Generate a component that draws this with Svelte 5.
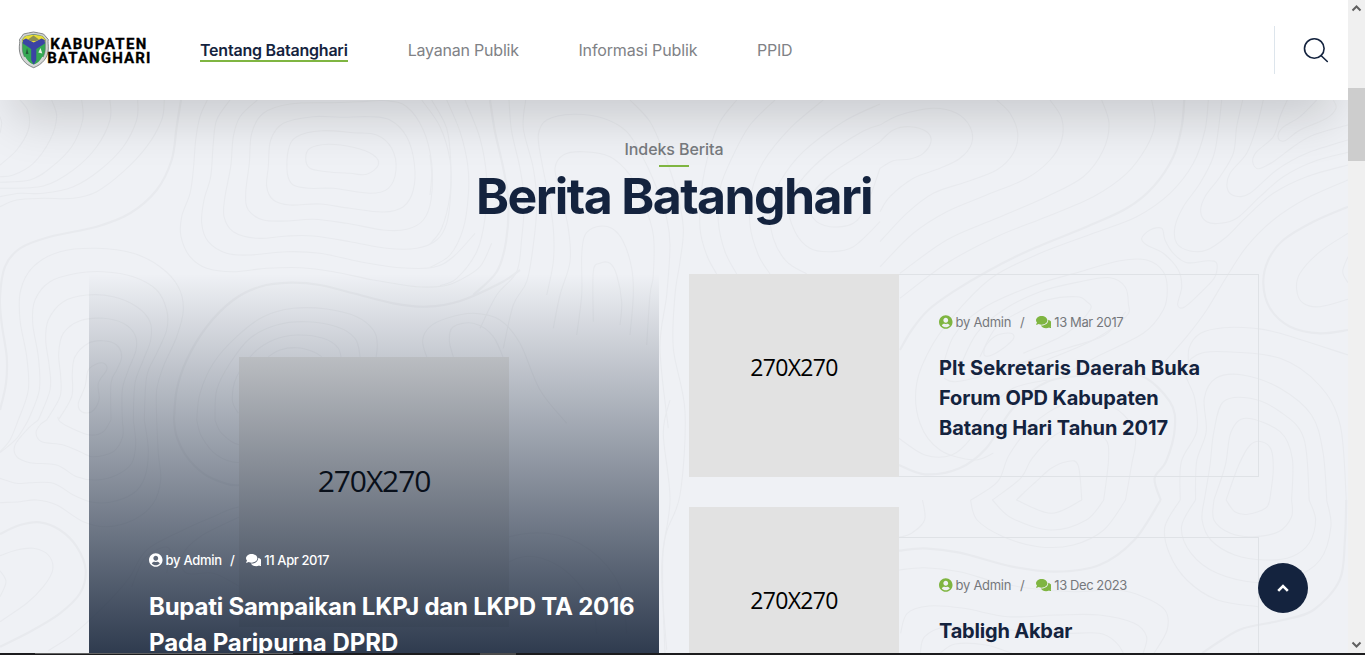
<script>
  const nav = [
    { label: 'Tentang Batanghari', ls: -0.21, w: 148, active: true },
    { label: 'Layanan Publik', ls: -0.21, w: 111 },
    { label: 'Informasi Publik', ls: -0.12, w: 119 },
    { label: 'PPID', ls: -0.3, w: 36 }
  ];

  const feature = {
    date: '11 Apr 2017',
    ls: -0.4,
    lines: [['Bupati Sampaikan LKPJ dan LKPD TA 2016', -0.24], ['Pada Paripurna DPRD', -0.05]]
  };

  const posts = [
    {
      date: '13 Mar 2017',
      ls: -0.4,
      lines: [['Plt Sekretaris Daerah Buka', 0.08], ['Forum OPD Kabupaten', -0.1], ['Batang Hari Tahun 2017', -0.07]]
    },
    { date: '13 Dec 2023', ls: -0.42, lines: [['Tabligh Akbar', -0.2]] }
  ];

  // Contour lines of the topographic backdrop, as point lists per map tile.
  // kind: 0 = thin, 1 = bold, 2 = thin and closed
  const tiles = [
    { x: 0, y: 90, sx: 3, sy: 3, lines: [
      [0, '0,80 5,100 0,130'],
      [0, '60,30 85,65 85,120 50,180 0,225'],
      [0, '155,30 170,80 150,150 100,220 40,255 0,260'],
      [0, '245,30 248,90 215,170 150,235 90,270 0,277'],
      [0, '330,30 330,90 290,170 220,240 130,288 0,295'],
      [0, '413,30 410,90 370,170 300,240 220,290 130,310 60,310 0,320'],
      [0, '493,30 485,90 440,170 370,245 290,305 220,325 130,325 50,330 0,350'],
      [1, '543,30 530,110 515,210 470,300 390,370 290,410 150,440 60,475 15,530 0,620 5,700 20,800 18,880 0,960'],
      [0, '622,30 600,80 587,150 580,240 570,310 545,380 543,440 570,500 620,535 700,545 800,535 900,533 1000,545 1120,570 1250,590 1330,588 1380,570 1440,530 1475,460'],
      [0, '690,30 650,90 640,160 632,260 612,330 605,400 625,455 680,490 750,495 860,485 960,490 1080,515 1200,533 1300,532 1360,500 1425,430'],
      [0, '772,30 720,80 700,140 692,230 675,320 672,380 700,425 770,445 860,438 940,438 1050,455 1160,475 1250,475 1310,450 1340,400 1352,310 1350,210 1320,110 1265,30'],
      [2, '1000,38 870,42 790,70 755,130 748,220 737,310 745,360 790,390 860,393 940,388 1040,400 1150,420 1220,418 1270,390 1293,330 1295,220 1270,120 1220,50 1160,32 1080,35'],
      [2, '940,80 850,100 812,150 805,230 800,290 820,330 870,345 960,342 1050,355 1150,366 1210,350 1240,300 1243,220 1220,140 1170,90 1110,80 1020,82'],
      [2, '965,122 890,140 865,180 862,250 880,285 930,295 1000,295 1110,310 1165,295 1188,240 1175,175 1130,135 1060,128'],
      [2, '985,163 930,175 917,205 930,235 980,245 1050,250 1100,253 1135,225 1120,195 1060,172'],
      [0, '55,990 85,900 80,800 60,690 62,600 100,530 180,485 290,475 400,490 480,530 535,590 550,660 530,740 490,830 470,900 470,990'],
      [0, '85,990 118,900 115,800 98,700 105,630 150,575 230,550 310,545 400,560 470,600 500,660 500,720 470,790 440,860 433,990'],
      [0, '115,990 150,900 148,830 137,750 145,690 190,635 260,615 340,620 410,650 450,695 452,750 430,810 405,880 400,990'],
      [0, '140,990 180,920 182,860 176,790 190,730 240,692 310,685 370,700 405,735 408,780 385,840 367,900 367,990'],
      [0, '175,990 215,920 217,850 225,800 265,760 310,752 350,765 365,800 350,840 333,880 333,990'],
      [2, '295,820 265,840 255,890 235,940 245,965 275,965 297,930 295,880 320,840 315,822'],
      [1, '522,990 530,900 560,810 620,710 700,630 780,590 870,578 960,585 1060,610 1180,640 1280,650 1380,633 1500,580 1560,540'],
      [0, '590,990 600,910 640,820 710,740 790,680 880,655 980,657 1070,680 1120,720 1132,765 1127,840 1150,960 1200,1100'],
      [0, '645,990 650,900 690,820 750,745 830,705 920,695 1010,710 1065,745 1080,800 1085,900'],
      [0, '715,970 697,930 710,860 760,790 820,750 890,735 970,745 1015,775 1025,820'],
      [0, '805,800 840,780 890,773 940,785 965,800'],
      [0, '1310,860 1280,800 1268,750 1290,710 1340,685 1420,670 1500,690 1560,760 1620,900 1700,1000'],
      [0, '1380,850 1360,800 1348,750 1360,710 1420,700 1480,740 1520,830']
    ] },
    { x: 430, y: 95, sx: 3, sy: 3, lines: [
      [0, '0,180 5,240 0,300'],
      [0, '5,15 50,100 62,200 60,300 35,400 0,447'],
      [0, '50,15 90,110 113,210 115,300 100,400 60,480 0,517'],
      [0, '105,15 150,130 170,250 165,370 140,470 80,550 30,572'],
      [1, '180,15 195,110 220,220 235,320 228,440 200,530 130,600'],
      [0, '237,15 245,110 270,220 283,320 275,430 260,530 200,600 150,700'],
      [0, '287,15 280,100 310,220 320,330 310,450 290,560 250,630 220,760'],
      [0, '350,600 370,500 370,400 355,300 335,200 325,120 350,75 430,58 520,70 590,110 640,190 680,280 710,370 720,450 710,600 690,760 715,1000'],
      [0, '370,700 390,600 420,500 415,400 390,290 375,220 400,180 460,170 540,185 600,240 640,320 670,420 670,540 660,600 650,750'],
      [0, '440,720 455,600 455,480 465,420 500,395 545,400 580,440 605,520 610,600 600,720'],
      [0, '490,680 490,530 510,505 540,505 560,540 575,620 570,690'],
      [0, '600,15 660,80 700,170 740,290 760,400 750,500 735,600 730,760 765,950 750,1200 700,1360 705,1680'],
      [0, '920,15 870,80 840,160 815,280 810,400 830,480 860,537'],
      [0, '1035,15 960,90 910,180 870,280 865,380 885,470 920,537'],
      [0, '1180,15 1080,100 1000,200 965,290 960,390 985,480 1020,537'],
      [0, '1350,27 1240,80 1120,170 1050,260 1020,340 1030,430 1070,500 1130,537'],
      [0, '1350,90 1300,108 1190,180 1110,260 1075,330 1095,410 1140,460 1200,470 1270,455 1350,380'],
      [0, '1350,140 1290,180 1200,240 1140,310 1150,370 1200,395 1270,385 1310,330 1350,220']
    ] },
    { x: 880, y: 90, sx: 3, sy: 3, lines: [
      [0, '0,155 40,120 90,110 140,125 153,155 130,190 90,207 40,212 0,235'],
      [0, '0,105 60,75 160,55 230,70 270,110 275,160 240,205 180,235 100,265 30,320 0,365'],
      [0, '350,30 390,70 413,130 400,190 350,240 260,275 160,310 80,370 0,455'],
      [0, '510,30 545,85 545,150 510,210 440,265 320,315 200,365 100,430 0,530'],
      [0, '665,30 687,100 670,180 610,260 500,320 350,385 200,450 60,550'],
      [0, '815,30 825,100 800,170 740,250 640,320 500,380 350,440 200,520 60,625'],
      [1, '913,30 905,110 880,200 820,290 740,355 620,410 450,480 320,545 220,605 145,660 95,720 60,780'],
      [0, '985,30 975,120 940,220 870,310 770,380 640,430 480,490 340,560 240,655 160,760 110,880 120,1000 180,1080 280,1110 340,1090'],
      [0, '1025,30 1015,120 1000,200 960,280 910,350 885,410 890,460 930,483 980,480 1040,440 1100,380 1180,310 1280,260 1404,225'],
      [0, '1088,30 1070,110 1060,190 1020,260 975,320 962,365 980,395 1020,400 1070,385 1140,320 1210,260 1300,215 1404,187'],
      [0, '1150,30 1130,110 1100,190 1050,250 1042,295 1065,318 1110,310 1190,240 1280,190 1404,150'],
      [0, '1222,30 1200,80 1180,140 1130,185 1118,215 1135,236 1180,215 1240,170 1300,135 1404,105'],
      [0, '1310,30 1260,80 1205,115 1195,145 1215,152 1260,120 1340,85 1368,55 1360,30'],
      [0, '850,820 920,740 980,660 1040,560 1100,470 1180,390 1280,325 1404,270'],
      [1, '1404,350 1300,395 1210,450 1165,510 1150,580 1170,655 1230,710 1320,730 1404,720'],
      [0, '1404,430 1320,485 1260,550 1250,600 1270,640 1320,650 1404,628'],
      [0, '1404,500 1388,545 1404,578'],
      [2, '845,415 810,420 785,445 800,465 850,490 895,540 905,590 893,645 915,650 970,600 1005,560 1010,520 985,512 920,518 880,490 855,450'],
      [0, '180,860 220,740 300,660 450,590 600,545 720,512 800,510 850,545 862,600 850,660 790,730 650,800 560,850'],
      [0, '240,830 290,730 370,660 480,605 600,575 690,563 735,590 745,640 738,680 640,750 500,810'],
      [0, '300,800 350,710 430,660 500,630 590,620 620,635 630,660 560,730 430,790']
    ] },
    { x: 680, y: 265, sx: 2.613, sy: 3, lines: [
      [2, '865,205 830,210 800,240 795,270 815,270 850,245 872,220'],
      [0, '690,340 720,350 800,330 900,290 1010,250 1110,210 1165,140'],
      [1, '572,600 640,628 730,610 800,550 870,430 960,350 1080,330 1200,330 1280,410 1293,490 1270,590 1240,640 1256,705'],
      [0, '572,520 640,570 710,570 760,520 800,440 870,370 960,345'],
      [0, '760,705 830,650 860,570 920,480 1000,420 1090,410 1160,450 1190,520 1180,600 1164,705'],
      [0, '816,705 890,640 920,580 980,510 1050,490 1110,520 1120,580 1107,705'],
      [0, '879,705 930,650 970,610 1010,590 1040,600 1050,705'],
      [0, '1307,705 1310,590 1350,500 1345,400 1320,320 1350,270 1420,260 1568,280 1670,360 1725,480 1741,705'],
      [0, '1347,705 1350,590 1375,500 1370,400 1400,340 1470,330 1568,370 1650,450 1680,560 1690,705'],
      [0, '1370,705 1385,600 1395,500 1420,410 1490,400 1568,440 1630,520 1644,705'],
      [0, '1395,705 1425,600 1440,500 1480,460 1568,500 1600,580 1598,705'],
      [0, '1427,705 1460,600 1490,540 1520,530 1545,555 1550,620 1541,705'],
      [0, '1330,310 1330,250 1360,205 1420,188 1500,190 1568,205 1746,270']
    ] },
    { x: 680, y: 500, sx: 2.289, sy: 3, lines: [
      [1, '501,152 560,145 640,158 760,200 860,215 960,195 1040,120 1100,0'],
      [0, '555,0 560,60 530,100 501,112'],
      [0, '665,0 680,60 740,110 820,140 900,135 970,90 1020,0'],
      [0, '715,0 760,55 850,90 930,60 970,0'],
      [0, '770,0 850,40 920,0'],
      [0, '501,210 560,203 640,215 720,245 800,265 900,275 1000,270 1060,290 1110,330 1115,390 1085,460'],
      [0, '505,400 520,340 570,318 650,325 750,350 860,345 960,345 1040,370 1068,410 1060,460'],
      [0, '550,460 560,410 610,380 700,385 860,400 960,400 1000,430 1015,460'],
      [0, '595,460 630,432 700,435 760,460'],
      [0, '1145,0 1110,80 1120,160 1160,240 1230,300 1323,320'],
      [0, '1180,0 1148,80 1170,160 1230,220 1323,248 1400,235 1465,180 1490,80 1480,0'],
      [0, '1200,0 1195,60 1215,120 1270,165 1340,180 1400,170 1440,130 1455,60 1440,0'],
      [0, '1222,0 1222,60 1260,100 1310,110 1370,95 1400,50 1400,0'],
      [0, '1250,0 1270,35 1300,43 1340,25 1350,0'],
      [1, '1525,0 1522,120 1510,240 1450,330 1380,360 1290,385 1240,420 1195,460']
    ] },
    { x: 0, y: 400, sx: 3, sy: 3, lines: [
      [0, '0,155 30,120 55,60'],
      [0, '0,158 50,115 85,60'],
      [0, '333,60 310,95 270,105 215,85 180,65 173,50'],
      [0, '367,60 368,110 340,155 280,170 240,155 190,135 125,125 108,100 120,75 140,60'],
      [0, '400,60 407,130 395,190 350,225 290,240 230,230 170,195 90,188 50,170 45,135 85,85 115,60'],
      [0, '433,60 445,150 435,230 400,280 330,307 270,305 220,285 160,250 90,248 50,250 0,235'],
      [0, '470,60 475,160 482,240 460,310 400,360 320,380 250,365 170,315 110,300 60,305 0,308'],
      [1, '522,60 530,110 560,170 610,220 670,248 720,255 850,230 960,240'],
      [0, '590,60 605,110 650,165 720,188 850,170'],
      [0, '645,60 665,100 720,135 790,120'],
      [1, '0,402 60,375 120,367 180,390 230,440 257,510 240,580 180,640 90,695 0,740'],
      [0, '0,467 50,450 100,445 145,465 158,510 130,560 80,610 0,665'],
      [0, '0,512 18,545 0,590'],
      [0, '145,752 210,710 267,662 340,590 390,530 440,450 550,390 640,350 720,320 900,300'],
      [0, '395,560 430,480 480,445 510,450 500,520'],
      [0, '720,350 600,410 545,470 560,520 640,520 720,560'],
      [0, '1380,660 1400,500 1500,420 1640,400 1770,450 1860,560 1880,700'],
      [0, '1450,660 1480,530 1570,470 1680,500 1770,600 1790,700'],
      [0, '2000,750 1985,500 2010,300 1990,100 2010,0']
    ] }
  ];

  // Smooth curve through a point list (Catmull-Rom turned into cubic segments).
  function curve(tile, kind, str) {
    const p = str.split(' ').map((s) => {
      const [x, y] = s.split(',').map(Number);
      return [tile.x + x / tile.sx, tile.y + y / tile.sy];
    });
    const n = p.length;
    const closed = kind === 2;
    const at = (i) => (closed ? p[(i + n) % n] : p[Math.max(0, Math.min(n - 1, i))]);
    let d = `M${p[0][0].toFixed(1)} ${p[0][1].toFixed(1)}`;
    for (let i = 0; i < (closed ? n : n - 1); i++) {
      const [a, b, c, e] = [at(i - 1), at(i), at(i + 1), at(i + 2)];
      const v = [b[0] + (c[0] - a[0]) / 6, b[1] + (c[1] - a[1]) / 6, c[0] - (e[0] - b[0]) / 6, c[1] - (e[1] - b[1]) / 6, c[0], c[1]];
      d += 'C' + v.map((k) => k.toFixed(1)).join(' ');
    }
    return d;
  }

  const contours = tiles.flatMap((t) => t.lines.map(([k, s]) => ({ bold: k === 1, d: curve(t, k, s) })));
</script>

{#snippet meta(date, ls)}
  <div class="meta">
    <svg class="user" viewBox="0 0 496 512"><path d="M248 8C111 8 0 119 0 256s111 248 248 248 248-111 248-248S385 8 248 8zm0 96c48.6 0 88 39.4 88 88s-39.4 88-88 88-88-39.4-88-88 39.4-88 88-88zm0 344c-58.7 0-111.3-26.6-146.5-68.2 18.8-35.4 55.6-59.8 98.5-59.8 2.4 0 4.8.4 7.1 1.1 13 4.2 26.6 6.9 40.9 6.9 14.3 0 28-2.7 40.9-6.9 2.3-.7 4.7-1.1 7.1-1.1 42.9 0 79.7 24.4 98.5 59.8C359.3 421.4 306.7 448 248 448z" /></svg>
    <span class="by">by Admin</span>
    <span class="slash">/</span>
    <svg class="chat" viewBox="0 0 576 512"><path d="M416 192c0-88.4-93.1-160-208-160S0 103.6 0 192c0 34.3 14.1 65.9 38 92-13.4 30.2-35.5 54.2-35.8 54.5-2.2 2.3-2.8 5.7-1.5 8.7S4.8 352 8 352c36.6 0 66.9-12.3 88.7-25 32.2 15.7 70.3 25 111.3 25 114.9 0 208-71.6 208-160zm122 220c23.9-26 38-57.7 38-92 0-66.9-53.5-124.2-129.3-148.1.9 6.6 1.3 13.3 1.3 20.1 0 105.9-107.7 192-240 192-10.8 0-21.3-.8-31.7-1.9C207.8 439.6 281.8 480 368 480c41 0 79.1-9.2 111.3-25 21.8 12.7 52.1 25 88.7 25 3.2 0 6.1-1.9 7.3-4.8 1.3-2.9.7-6.3-1.5-8.7-.3-.3-22.4-24.2-35.8-54.5z" /></svg>
    <span style:letter-spacing="{ls}px">{date}</span>
  </div>
{/snippet}

{#snippet title(lines)}
  <h3>
    {#each lines as [text, ls]}
      <span class="line" style:letter-spacing="{ls}px">{text}</span>
    {/each}
  </h3>
{/snippet}

<div class="window">
  <div class="page">
    <header>
      <svg class="logo" width="132" height="40" viewBox="18 30 132 40">
        <path d="M33.5 32C37 32.200 40 33.600 43.500 34L48.300 39.500C47.600 42 48.600 45 48.300 49C48 58 42 64.500 33.700 67.700C25 64.500 19.800 58 19.300 49C19.100 45 20.200 42 19.500 39.500L23.500 34C27 33.600 30 32.200 33.500 32Z" fill="#d2d4d3" stroke="#6b6e70" stroke-width=".8" />
        <path d="M33.500 34.500C37 34.500 40 35.700 42.700 36.300L45.300 39.500V49C45 57 40 62.500 33.700 65.200C27.500 62.500 22.700 57 22.300 49V39.500L25 36.300C28 35.700 31 34.500 33.500 34.500Z" fill="#35a853" stroke="#5c6668" stroke-width=".5" />
        <path d="M22.500 39.500L25 36.500C30 34.500 37 34.500 42.700 36.500L45.200 39.500V42L34 43L22.500 42Z" fill="#e9dc36" />
        <path d="M28 39.500L33.500 35.500L39 39.500L36 41H31Z" fill="#8c8f52" />
        <path d="M23 40L26 38.500L33.700 42.500L41.500 38.500L44.800 40V43.500L36.300 49V60L33.700 65L31.200 60V49L23 43.500Z" fill="#3b43a4" />
        <path d="M27 48L28.500 54H25.700Z" fill="#23593a" />
        <path d="M40.500 48L42.300 53.500L38.300 52.500Z" fill="#e8f0e6" />
        <path d="M24.500 57C27 62 30 64 33.700 65.500C37.500 64 40.500 62 43 57" fill="none" stroke="#d9dadb" stroke-width="1.500" />
        <text x="50.300" y="48.700" textLength="96" lengthAdjust="spacing">KABUPATEN</text>
        <text x="47.300" y="63" textLength="103" lengthAdjust="spacing">BATANGHARI</text>
      </svg>
      <nav>
        {#each nav as item}
          <a class:active={item.active} style:letter-spacing="{item.ls}px" style:width="{item.w}px">{item.label}</a>
        {/each}
      </nav>
      <div class="search">
        <svg width="26" height="26" viewBox="0 0 26 26"><circle cx="11.300" cy="11.500" r="9.800" /><path d="M18 18.500L24.300 24.500" /></svg>
      </div>
    </header>

    <main>
      <svg class="topo" width="1348" height="655" viewBox="0 0 1348 655">
        {#each contours as c}
          <path class:bold={c.bold} d={c.d} />
        {/each}
      </svg>

      <div class="heading">
        <p>Indeks Berita</p>
        <i></i>
        <h2>Berita Batanghari</h2>
      </div>

      <div class="columns">
        <article class="feature">
          <div class="thumb">270X270</div>
          <div class="shade"></div>
          <div class="caption">
            {@render meta(feature.date, feature.ls)}
            {@render title(feature.lines)}
          </div>
        </article>

        <div class="list">
          {#each posts as post}
            <article class="post">
              <div class="thumb">270X270</div>
              <div class="body">
                {@render meta(post.date, post.ls)}
                {@render title(post.lines)}
              </div>
            </article>
          {/each}
        </div>
      </div>
    </main>

    <button class="top" aria-label="Top">
      <svg width="14" height="10" viewBox="0 0 14 10"><path d="M2.200 7.800L7 3L11.800 7.800" /></svg>
    </button>
  </div>

  <div class="scroll">
    <svg width="17" height="17" viewBox="0 0 17 17"><path d="M4.500 10.500L8.500 6.500L12.500 10.500" /></svg>
    <div class="track"><div class="bar"></div></div>
    <svg width="17" height="17" viewBox="0 0 17 17"><path d="M4.500 6.500L8.500 10.500L12.500 6.500" /></svg>
  </div>
  <div class="edge"><i></i><b></b></div>
</div>

<style>
  :global(body) { margin: 0; overflow: hidden; }
  .window {
    position: relative;
    display: flex;
    width: 1365px;
    height: 655px;
    overflow: hidden;
    font-family: Inter, "Noto Sans", sans-serif;
    font-size: 16px;
    color: #75787c;
    background: #eff1f5;
  }
  .page { position: relative; width: 1348px; height: 655px; overflow: hidden; display: flex; flex-direction: column; }
  header {
    position: relative;
    z-index: 2;
    box-sizing: border-box;
    flex: none;
    height: 100px;
    padding: 0 19px 0 18px;
    display: flex;
    align-items: center;
    background: #fff;
    box-shadow: 0 30px 50px -12px rgba(0, 0, 0, 0.16);
  }
  .logo { flex: none; }
  .logo text { font: 700 15px Roboto, Arial, sans-serif; fill: #000; stroke: #000; stroke-width: 0.3; }
  nav { display: flex; gap: 59.7px; margin-left: 50px; }
  nav a { white-space: nowrap; padding-top: 2px; line-height: 20px; color: #808286; border-bottom: 2px solid transparent; }
  nav a.active { color: #14233e; font-weight: 600; border-color: #7fb541; }
  .search { margin-left: auto; height: 48px; width: 54px; border-left: 1px solid #dde5ec; display: flex; align-items: center; justify-content: flex-end; }
  .search svg { fill: none; stroke: #14233e; stroke-width: 1.6; stroke-linecap: round; }

  main { position: relative; flex: none; height: 555px; }
  .topo { position: absolute; left: 0; top: -100px; fill: none; stroke: #e8eaee; stroke-width: 1.1; }
  .topo .bold { stroke-width: 2.2; }

  .heading { position: relative; z-index: 3; padding-top: 39px; display: flex; flex-direction: column; align-items: center; }
  .heading p { margin: 0; line-height: 20px; font-weight: 500; letter-spacing: -0.08px; color: #75787c; }
  .heading i { width: 30px; height: 2px; margin-top: 6px; background: #7fb541; }
  h2 { margin: -1px 0 1px; color: #14233e; font-size: 50px; line-height: 60px; font-weight: 700; letter-spacing: -1.62px; white-space: nowrap; }

  .columns { position: relative; display: flex; gap: 30px; margin: 47px 0 0 89px; width: 1170px; align-items: flex-start; }
  .feature { position: relative; flex: none; width: 570px; height: 436px; display: flex; align-items: center; justify-content: center; }
  .thumb {
    flex: none;
    display: flex;
    align-items: center;
    justify-content: center;
    background: #e2e2e2;
    color: #000;
    font-family: "Open Sans", "Noto Sans", sans-serif;
    font-weight: 500;
  }
  .feature .thumb { width: 270px; height: 270px; font-size: 30px; letter-spacing: -1.1px; box-sizing: border-box; padding-bottom: 24px; }
  .shade { position: absolute; inset: 0; background: linear-gradient(180deg, rgba(18, 32, 54, 0) 0%, rgb(18, 32, 54) 100%); }
  .caption { position: absolute; left: 60px; top: 276px; color: #fff; }
  .meta { display: flex; align-items: center; height: 20px; font-size: 13px; line-height: 20px; white-space: nowrap; }
  .meta svg { flex: none; height: 14px; fill: #7fb541; }
  .meta .user { width: 13.560px; margin-right: 3px; }
  .meta .chat { width: 15.750px; margin-right: 3px; }
  .by { width: 55.500px; letter-spacing: -0.28px; }
  .slash { width: 5px; margin: 0 10.500px 0 9px; }
  .caption .meta { font-weight: 500; }
  .caption .meta svg { fill: #fff; }
  h3 { margin: 0; font-weight: 700; white-space: nowrap; }
  .line { display: block; }
  .caption h3 { margin-top: 19px; font-size: 24px; line-height: 36px; }

  .list { display: flex; flex-direction: column; gap: 30px; width: 570px; }
  .post { display: flex; align-items: center; }
  .post .thumb { width: 210px; height: 203px; font-size: 23px; letter-spacing: -0.7px; box-sizing: border-box; padding-bottom: 18px; }
  .body { box-sizing: border-box; width: 360px; padding: 37px 0 33px 40px; border: 1px solid #dfe2e6; border-left: 0; }
  .body h3 { margin-top: 21px; font-size: 20px; line-height: 30px; color: #14233e; }

  .top {
    position: absolute;
    left: 1258px;
    top: 563px;
    width: 50px;
    height: 50px;
    padding: 0;
    border: 0;
    border-radius: 50%;
    background: #14233e;
    display: flex;
    align-items: center;
    justify-content: center;
  }
  .top svg { fill: none; stroke: #fff; stroke-width: 2.6; }

  .scroll { flex: none; width: 17px; height: 653px; display: flex; flex-direction: column; background: #f0f0f0; }
  .scroll svg { flex: none; fill: none; stroke: #606060; stroke-width: 2; }
  .track { flex: 1; padding-top: 71px; }
  .bar { height: 73px; background: #cdcdcd; }
  .edge { position: absolute; left: 0; right: 0; bottom: 0; height: 2px; background: #1c1c1e; display: flex; }
  .edge i { width: 258px; height: 1px; margin-left: 35px; background: #626262; }
  .edge b { width: 36px; margin-left: 187px; background: #4b4b4b; }
</style>
